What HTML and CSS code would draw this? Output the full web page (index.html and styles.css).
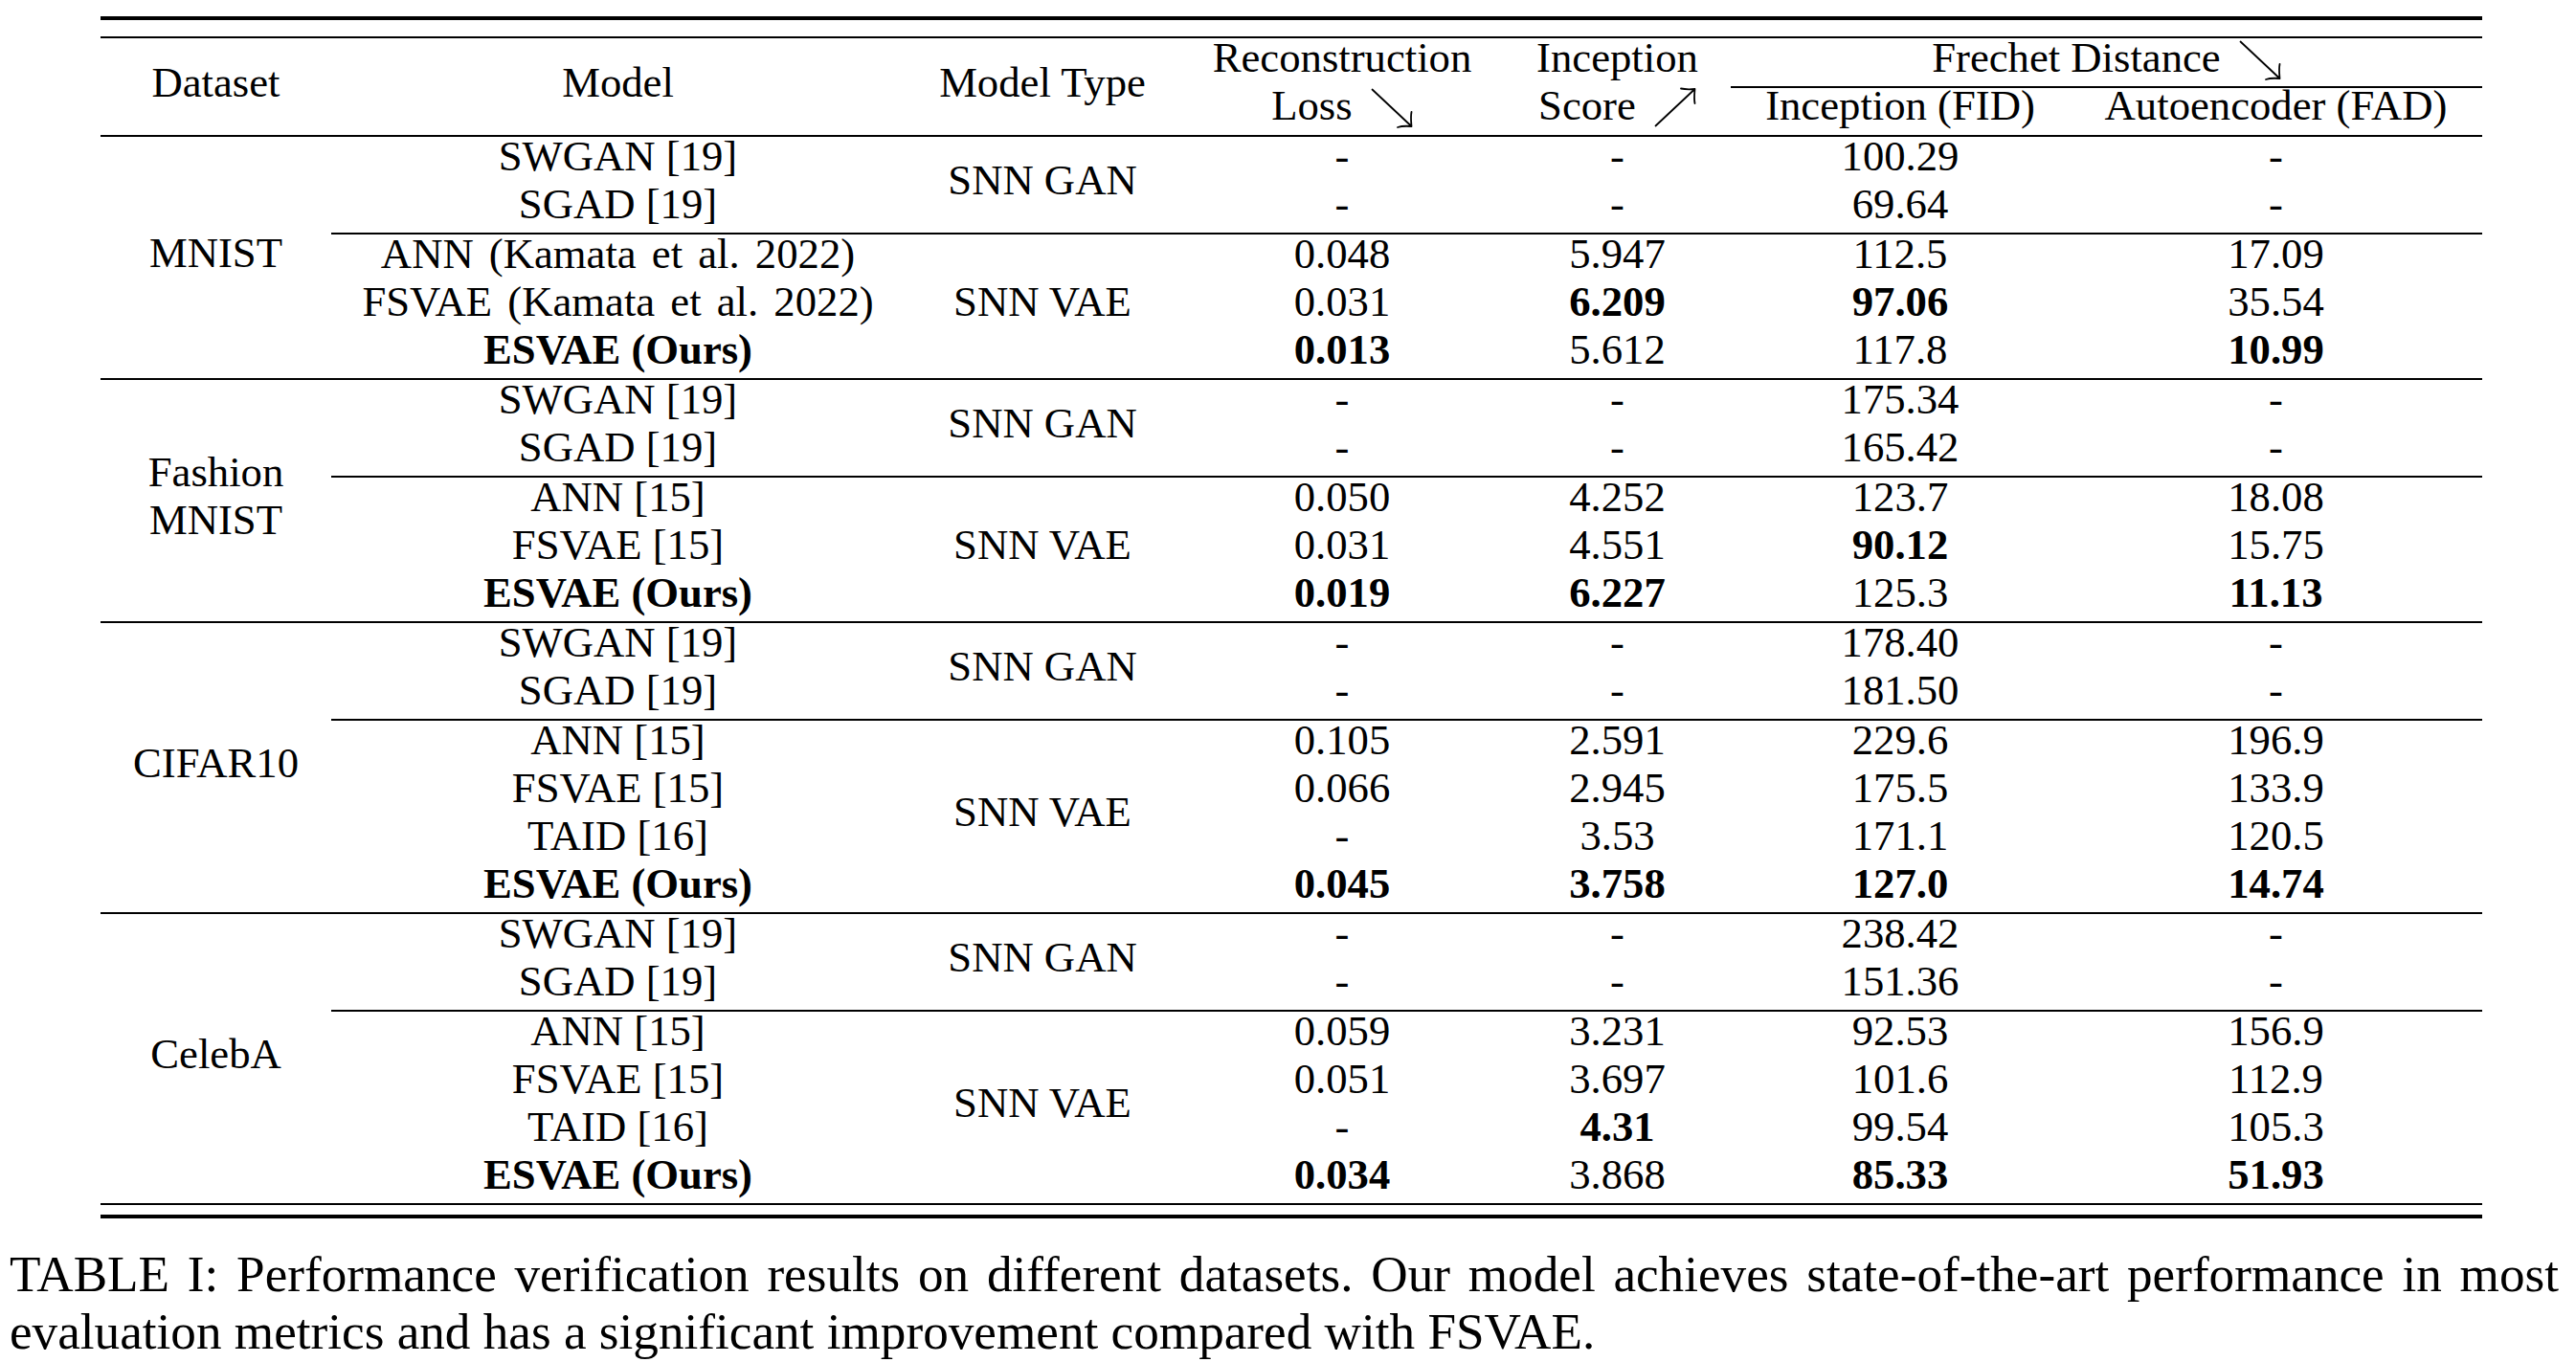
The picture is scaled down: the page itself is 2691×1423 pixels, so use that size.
FILE: index.html
```html
<!DOCTYPE html>
<html lang="en">
<head>
<meta charset="utf-8">
<title>TABLE I</title>
<link rel="stylesheet" href="styles.css">
</head>
<body>
<div class="frame">
<table class="results">
  <colgroup>
    <col class="c-ds"><col class="c-model"><col class="c-type"><col class="c-rec"><col class="c-is"><col class="c-fid"><col class="c-fad">
  </colgroup>
  <thead>
    <tr>
      <th rowspan="2">Dataset</th>
      <th rowspan="2">Model</th>
      <th rowspan="2">Model Type</th>
      <th rowspan="2" class="multi top"><div class="l">Reconstruction</div><div class="l">Loss <svg class="arr" viewBox="0 0 44 41" width="44" height="41"><path d="M1.5 1.5 L42 39.5 M42.5 40 C42 34 41.5 30 42.5 25 M42.5 40 C37 39.5 32.5 39.5 28 41" fill="none" stroke="#000" stroke-width="1.8" stroke-linecap="round"/></svg></div></th>
      <th rowspan="2" class="multi top"><div class="l">Inception</div><div class="l">Score <svg class="arr" viewBox="0 0 44 41" width="44" height="41"><path d="M1.5 39.5 L42 1.5 M42.5 1 C42 7 41.5 11 42.5 16 M42.5 1 C37 1.5 32.5 1.5 28 0.5" fill="none" stroke="#000" stroke-width="1.8" stroke-linecap="round"/></svg></div></th>
      <th colspan="2">Frechet Distance <svg class="arr" viewBox="0 0 44 41" width="44" height="41"><path d="M1.5 1.5 L42 39.5 M42.5 40 C42 34 41.5 30 42.5 25 M42.5 40 C37 39.5 32.5 39.5 28 41" fill="none" stroke="#000" stroke-width="1.8" stroke-linecap="round"/></svg></th>
    </tr>
    <tr>
      <th class="sub">Inception (FID)</th>
      <th class="sub">Autoencoder (FAD)</th>
    </tr>
  </thead>

  <tbody class="group">
    <tr>
      <td rowspan="5">MNIST</td>
      <td>SWGAN [19]</td>
      <td rowspan="2">SNN GAN</td>
      <td>-</td><td>-</td><td>100.29</td><td>-</td>
    </tr>
    <tr>
      <td>SGAD [19]</td>
      <td>-</td><td>-</td><td>69.64</td><td>-</td>
    </tr>
    <tr class="sub-start">
      <td class="cite">ANN (Kamata et al. 2022)</td>
      <td rowspan="3">SNN VAE</td>
      <td>0.048</td><td>5.947</td><td>112.5</td><td>17.09</td>
    </tr>
    <tr>
      <td class="cite">FSVAE (Kamata et al. 2022)</td>
      <td>0.031</td><td class="b">6.209</td><td class="b">97.06</td><td>35.54</td>
    </tr>
    <tr>
      <td class="b">ESVAE (Ours)</td>
      <td class="b">0.013</td><td>5.612</td><td>117.8</td><td class="b">10.99</td>
    </tr>
  </tbody>

  <tbody class="group">
    <tr>
      <td rowspan="5" class="multi"><div class="l">Fashion</div><div class="l">MNIST</div></td>
      <td>SWGAN [19]</td>
      <td rowspan="2">SNN GAN</td>
      <td>-</td><td>-</td><td>175.34</td><td>-</td>
    </tr>
    <tr>
      <td>SGAD [19]</td>
      <td>-</td><td>-</td><td>165.42</td><td>-</td>
    </tr>
    <tr class="sub-start">
      <td>ANN [15]</td>
      <td rowspan="3">SNN VAE</td>
      <td>0.050</td><td>4.252</td><td>123.7</td><td>18.08</td>
    </tr>
    <tr>
      <td>FSVAE [15]</td>
      <td>0.031</td><td>4.551</td><td class="b">90.12</td><td>15.75</td>
    </tr>
    <tr>
      <td class="b">ESVAE (Ours)</td>
      <td class="b">0.019</td><td class="b">6.227</td><td>125.3</td><td class="b">11.13</td>
    </tr>
  </tbody>

  <tbody class="group">
    <tr>
      <td rowspan="6">CIFAR10</td>
      <td>SWGAN [19]</td>
      <td rowspan="2">SNN GAN</td>
      <td>-</td><td>-</td><td>178.40</td><td>-</td>
    </tr>
    <tr>
      <td>SGAD [19]</td>
      <td>-</td><td>-</td><td>181.50</td><td>-</td>
    </tr>
    <tr class="sub-start">
      <td>ANN [15]</td>
      <td rowspan="4">SNN VAE</td>
      <td>0.105</td><td>2.591</td><td>229.6</td><td>196.9</td>
    </tr>
    <tr>
      <td>FSVAE [15]</td>
      <td>0.066</td><td>2.945</td><td>175.5</td><td>133.9</td>
    </tr>
    <tr>
      <td>TAID [16]</td>
      <td>-</td><td>3.53</td><td>171.1</td><td>120.5</td>
    </tr>
    <tr>
      <td class="b">ESVAE (Ours)</td>
      <td class="b">0.045</td><td class="b">3.758</td><td class="b">127.0</td><td class="b">14.74</td>
    </tr>
  </tbody>

  <tbody class="group">
    <tr>
      <td rowspan="6">CelebA</td>
      <td>SWGAN [19]</td>
      <td rowspan="2">SNN GAN</td>
      <td>-</td><td>-</td><td>238.42</td><td>-</td>
    </tr>
    <tr>
      <td>SGAD [19]</td>
      <td>-</td><td>-</td><td>151.36</td><td>-</td>
    </tr>
    <tr class="sub-start">
      <td>ANN [15]</td>
      <td rowspan="4">SNN VAE</td>
      <td>0.059</td><td>3.231</td><td>92.53</td><td>156.9</td>
    </tr>
    <tr>
      <td>FSVAE [15]</td>
      <td>0.051</td><td>3.697</td><td>101.6</td><td>112.9</td>
    </tr>
    <tr>
      <td>TAID [16]</td>
      <td>-</td><td class="b">4.31</td><td>99.54</td><td>105.3</td>
    </tr>
    <tr>
      <td class="b">ESVAE (Ours)</td>
      <td class="b">0.034</td><td>3.868</td><td class="b">85.33</td><td class="b">51.93</td>
    </tr>
  </tbody>
</table>
</div>

<p class="caption"><span class="line just">TABLE I: Performance verification results on different datasets. Our model achieves state-of-the-art performance in most</span> <span class="line">evaluation metrics and has a significant improvement compared with FSVAE.</span></p>
</body>
</html>
```

FILE: styles.css
```css
html, body {
  margin: 0;
  padding: 0;
  background: #ffffff;
  color: #000000;
  font-family: "Liberation Serif", "Times New Roman", Times, serif;
}

.frame {
  margin: 17px 0 0 105px;
  width: 2488px;
  border-top: 4px solid #000;
  border-bottom: 4px solid #000;
  padding: 17px 0 10px;
}

.results {
  width: 100%;
  table-layout: fixed;
  border-collapse: separate;
  border-spacing: 0;
  border-top: 2px solid #000;
  border-bottom: 2px solid #000;
  font-size: 44.7px;
}

.c-ds { width: 241px; }
.c-model { width: 599px; }
.c-type { width: 288px; }
.c-rec { width: 338px; }
.c-is { width: 237px; }
.c-fid { width: 354px; }
.c-fad { width: 431px; }

.results th,
.results td {
  padding: 0 0 10px;
  line-height: 40px;
  text-align: center;
  vertical-align: middle;
  font-weight: normal;
  white-space: nowrap;
}

.results .multi {
  padding-bottom: 0;
}

.results .multi .l {
  line-height: 40px;
  padding-bottom: 10px;
}

.results .top {
  vertical-align: top;
}

.results th.sub {
  border-top: 2px solid #000;
  line-height: 36px;
  padding-bottom: 13px;
}

.group > tr:first-child > td,
.group > tr.sub-start > td {
  border-top: 2px solid #000;
}

.results .b {
  font-weight: bold;
}

.results .cite {
  word-spacing: 5px;
}

.arr {
  vertical-align: -4px;
  margin-bottom: -4px;
  margin-left: 8px;
  overflow: visible;
}

.caption {
  margin: 29px 0 0 10px;
  width: 2663px;
  font-size: 53.2px;
  line-height: 60px;
}

.caption .line {
  display: block;
}

.caption .just {
  text-align: justify;
  text-align-last: justify;
}
```
